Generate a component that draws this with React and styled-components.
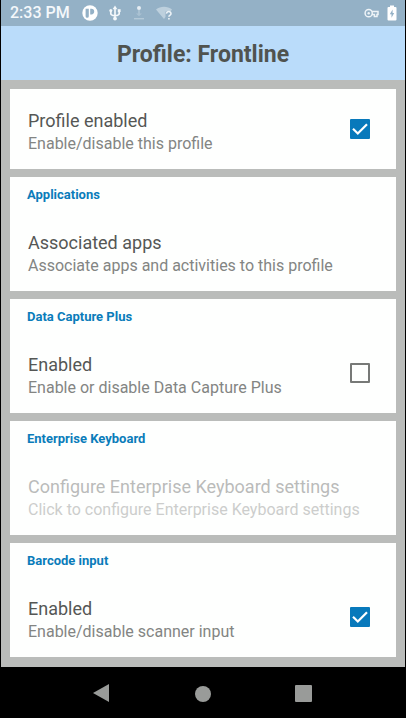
import React, { Component } from "react";
import styled, { createGlobalStyle } from "styled-components";

const GlobalStyle = createGlobalStyle`
  * {
    box-sizing: border-box;
  }
  body {
    margin: 0;
    background: #000;
    font-family: Roboto, "Liberation Sans", sans-serif;
  }
`;
const Screen = styled.div`
  display: flex;
  flex-direction: column;
  min-height: 100vh;
  background: #babcba;
  border: solid #000;
  border-width: 0 1px;
`;
const StatusBar = styled.div`
  display: flex;
  align-items: center;
  justify-content: space-between;
  height: 26px;
  padding: 0 8px 0 9px;
  color: #fff;
  background: #94b1c6;
`;
const StatusGroup = styled.div`
  display: flex;
  align-items: center;
  gap: ${props => props.$gap}px;
`;
const Clock = styled.span`
  font-size: 16px;
  font-weight: 500;
  line-height: 26px;
  color: #f4f8fb;
`;
const StatusIcon = styled.svg`
  display: block;
  flex: none;
  height: 16px;
`;
const Header = styled.header`
  display: flex;
  align-items: center;
  justify-content: center;
  height: 54px;
  padding-top: 4px;
  background: #badcfa;
`;
const Heading = styled.h1`
  margin: 0;
  font-size: 23px;
  font-weight: 700;
  line-height: 28px;
  color: #50534f;
`;
const CardList = styled.main`
  display: flex;
  flex: 1;
  flex-direction: column;
  gap: 8px;
  padding: 9px 9px 10px;
`;
const Card = styled.section`
  background: #fefffe;
`;
const CardLabel = styled.h2`
  margin: 0;
  padding: 8px 17px 6px;
  font-size: 13px;
  font-weight: 700;
  line-height: 20px;
  color: #0a7cba;
`;
const Row = styled.label`
  display: flex;
  align-items: center;
  justify-content: space-between;
  padding: 17px 26px 17px 18px;
`;
const RowButton = styled.button`
  display: block;
  width: 100%;
  padding: 17px 18px;
  border: 0;
  background: transparent;
  font-family: inherit;
  text-align: left;
  opacity: ${props => (props.disabled ? 0.4 : 1)};
`;
const RowTitle = styled.span`
  display: block;
  font-size: 18px;
  line-height: 30px;
  color: #555755;
`;
const RowSummary = styled.span`
  display: block;
  font-size: 16px;
  line-height: 16px;
  color: #838583;
`;
const CheckboxWrapper = styled.span`
  display: grid;
  flex: none;
  width: 20px;
  height: 20px;
`;
const Checkbox = styled.input`
  grid-area: 1 / 1;
  appearance: none;
  width: 20px;
  height: 20px;
  margin: 0;
  border: 2px solid #777977;
  border-radius: 1px;
  cursor: pointer;
  &:checked {
    border-color: #0879bb;
    background: #0879bb;
  }
`;
const CheckMark = styled.svg`
  grid-area: 1 / 1;
  width: 20px;
  height: 20px;
  pointer-events: none;
`;
const NavBar = styled.nav`
  display: flex;
  align-items: center;
  justify-content: center;
  gap: 77px;
  height: 51px;
  background: #000;
`;
const NavButton = styled.button`
  display: grid;
  place-items: center;
  width: 24px;
  height: 48px;
  padding: 0;
  border: 0;
  background: transparent;
  cursor: pointer;
`;
const NavIcon = styled.svg`
  width: 20px;
  height: 20px;
  fill: #999b99;
`;

const settings = [
  {
    id: "profile",
    title: "Profile enabled",
    summary: "Enable/disable this profile",
    checkable: true
  },
  {
    id: "apps",
    label: "Applications",
    title: "Associated apps",
    summary: "Associate apps and activities to this profile"
  },
  {
    id: "dataCapture",
    label: "Data Capture Plus",
    title: "Enabled",
    summary: "Enable or disable Data Capture Plus",
    checkable: true
  },
  {
    id: "keyboard",
    label: "Enterprise Keyboard",
    title: "Configure Enterprise Keyboard settings",
    summary: "Click to configure Enterprise Keyboard settings",
    disabled: true
  },
  {
    id: "barcode",
    label: "Barcode input",
    title: "Enabled",
    summary: "Enable/disable scanner input",
    checkable: true
  }
];

const NotificationIcons = () => (
  <StatusGroup $gap={10}>
    <StatusIcon width="16" viewBox="0 0 16 16">
      <circle cx="8" cy="8" r="7.7" fill="#fff" />
      <path
        d="M3.6 3.8h3.2v7.4a1.6 1.6 0 0 1-3.2 0zM8.2 3.8h1.2a2.8 2.8 0 0 1 0 5.6H8.2z"
        fill="#94b1c6"
      />
    </StatusIcon>
    <StatusIcon width="14" viewBox="0 0 14 16" fill="none" stroke="#f4f8fb">
      <path d="M7 3v11M2.8 5.5v3q0 1.9 4.2 2.2 4.2-.3 4.2-2.2v-3" strokeWidth="1.7" />
      <path d="M7 .6l2.4 3.6H4.6z" fill="#f4f8fb" stroke="none" />
      <circle cx="2.8" cy="5.6" r="1.5" fill="#f4f8fb" stroke="none" />
      <path d="M9.8 4.2h2.8V7H9.800z" fill="#f4f8fb" stroke="none" />
      <circle cx="7" cy="13.6" r="1.9" fill="#f4f8fb" stroke="none" />
    </StatusIcon>
    <StatusIcon width="14" viewBox="0 0 14 16">
      <circle cx="7" cy="3" r="2" fill="#e5edf3" />
      <path d="M6 5h2v3.5h2L7 11.2 4 8.5h2z" fill="#a9c1d2" />
      <path d="M2 13h10v1.4H2z" fill="#b4c9d8" />
    </StatusIcon>
    <StatusIcon width="17" viewBox="0 0 17 16">
      <path d="M0 4.5C4.5.8 11.5.8 16 4.5l-1.5 2h-5V12L8 14z" fill="#bdd0dd" />
      <path
        d="M10.6 8.6a2.2 2 0 1 1 3.5 1.5q-1.2.8-1.2 1.7M12.9 13v1.6"
        fill="none"
        stroke="#edf3f7"
        strokeWidth="1.6"
      />
    </StatusIcon>
  </StatusGroup>
);

const SystemIcons = () => (
  <StatusGroup $gap={8}>
    <StatusIcon width="15" viewBox="0 0 15 16" fill="none" stroke="#edf3f7">
      <circle cx="4.7" cy="8.2" r="3.6" strokeWidth="1.5" />
      <circle cx="4.7" cy="8.2" r="1.2" fill="#edf3f7" stroke="none" />
      <path d="M7.800 6.600h6.200v3h-1v2h-2.600v-2H7.800" strokeWidth="1.500" />
    </StatusIcon>
    <StatusIcon width="10" viewBox="0 0 10 16">
      <path d="M3 .5h4V2h1.500a1 1 0 0 1 1 1v11.500a1 1 0 0 1-1 1h-7a1 1 0 0 1-1-1V3a1 1 0 0 1 1-1H3z" fill="#fff" />
      <path d="M5.600 4.500L2.800 9.300h1.700v3.500l2.700-4.900H5.600z" fill="#94b1c6" />
    </StatusIcon>
  </StatusGroup>
);

class App extends Component {
  state = {
    profile: true,
    dataCapture: false,
    barcode: true
  };
  toggle = id => {
    this.setState({ [id]: !this.state[id] });
  };
  renderText = item => (
    <span>
      <RowTitle>{item.title}</RowTitle>
      <RowSummary>{item.summary}</RowSummary>
    </span>
  );
  render() {
    return (
      <>
        <GlobalStyle />
        <Screen>
          <StatusBar>
            <StatusGroup $gap={12}>
              <Clock>2:33 PM</Clock>
              <NotificationIcons />
            </StatusGroup>
            <SystemIcons />
          </StatusBar>
          <Header>
            <Heading>Profile: Frontline</Heading>
          </Header>
          <CardList>
            {settings.map(item => (
              <Card key={item.id}>
                {item.label && <CardLabel>{item.label}</CardLabel>}
                {item.checkable ? (
                  <Row htmlFor={item.id}>
                    {this.renderText(item)}
                    <CheckboxWrapper>
                      <Checkbox
                        type="checkbox"
                        id={item.id}
                        checked={this.state[item.id]}
                        onChange={() => this.toggle(item.id)}
                      />
                      {this.state[item.id] && (
                        <CheckMark viewBox="0 0 20 20">
                          <path
                            d="M3 9.8l4.800 4.700 9.200-9.300"
                            fill="none"
                            stroke="#fff"
                            strokeWidth="2.200"
                          />
                        </CheckMark>
                      )}
                    </CheckboxWrapper>
                  </Row>
                ) : (
                  <RowButton type="button" disabled={item.disabled}>
                    {this.renderText(item)}
                  </RowButton>
                )}
              </Card>
            ))}
          </CardList>
          <NavBar>
            <NavButton type="button" aria-label="Back">
              <NavIcon viewBox="0 0 20 20">
                <path d="M17 1v18L1 10z" />
              </NavIcon>
            </NavButton>
            <NavButton type="button" aria-label="Home">
              <NavIcon viewBox="0 0 20 20">
                <circle cx="10" cy="11" r="8" />
              </NavIcon>
            </NavButton>
            <NavButton type="button" aria-label="Recent apps">
              <NavIcon viewBox="0 0 20 20">
                <rect x="1" y="2" width="17" height="17" rx="1" />
              </NavIcon>
            </NavButton>
          </NavBar>
        </Screen>
      </>
    );
  }
}
export default App;
